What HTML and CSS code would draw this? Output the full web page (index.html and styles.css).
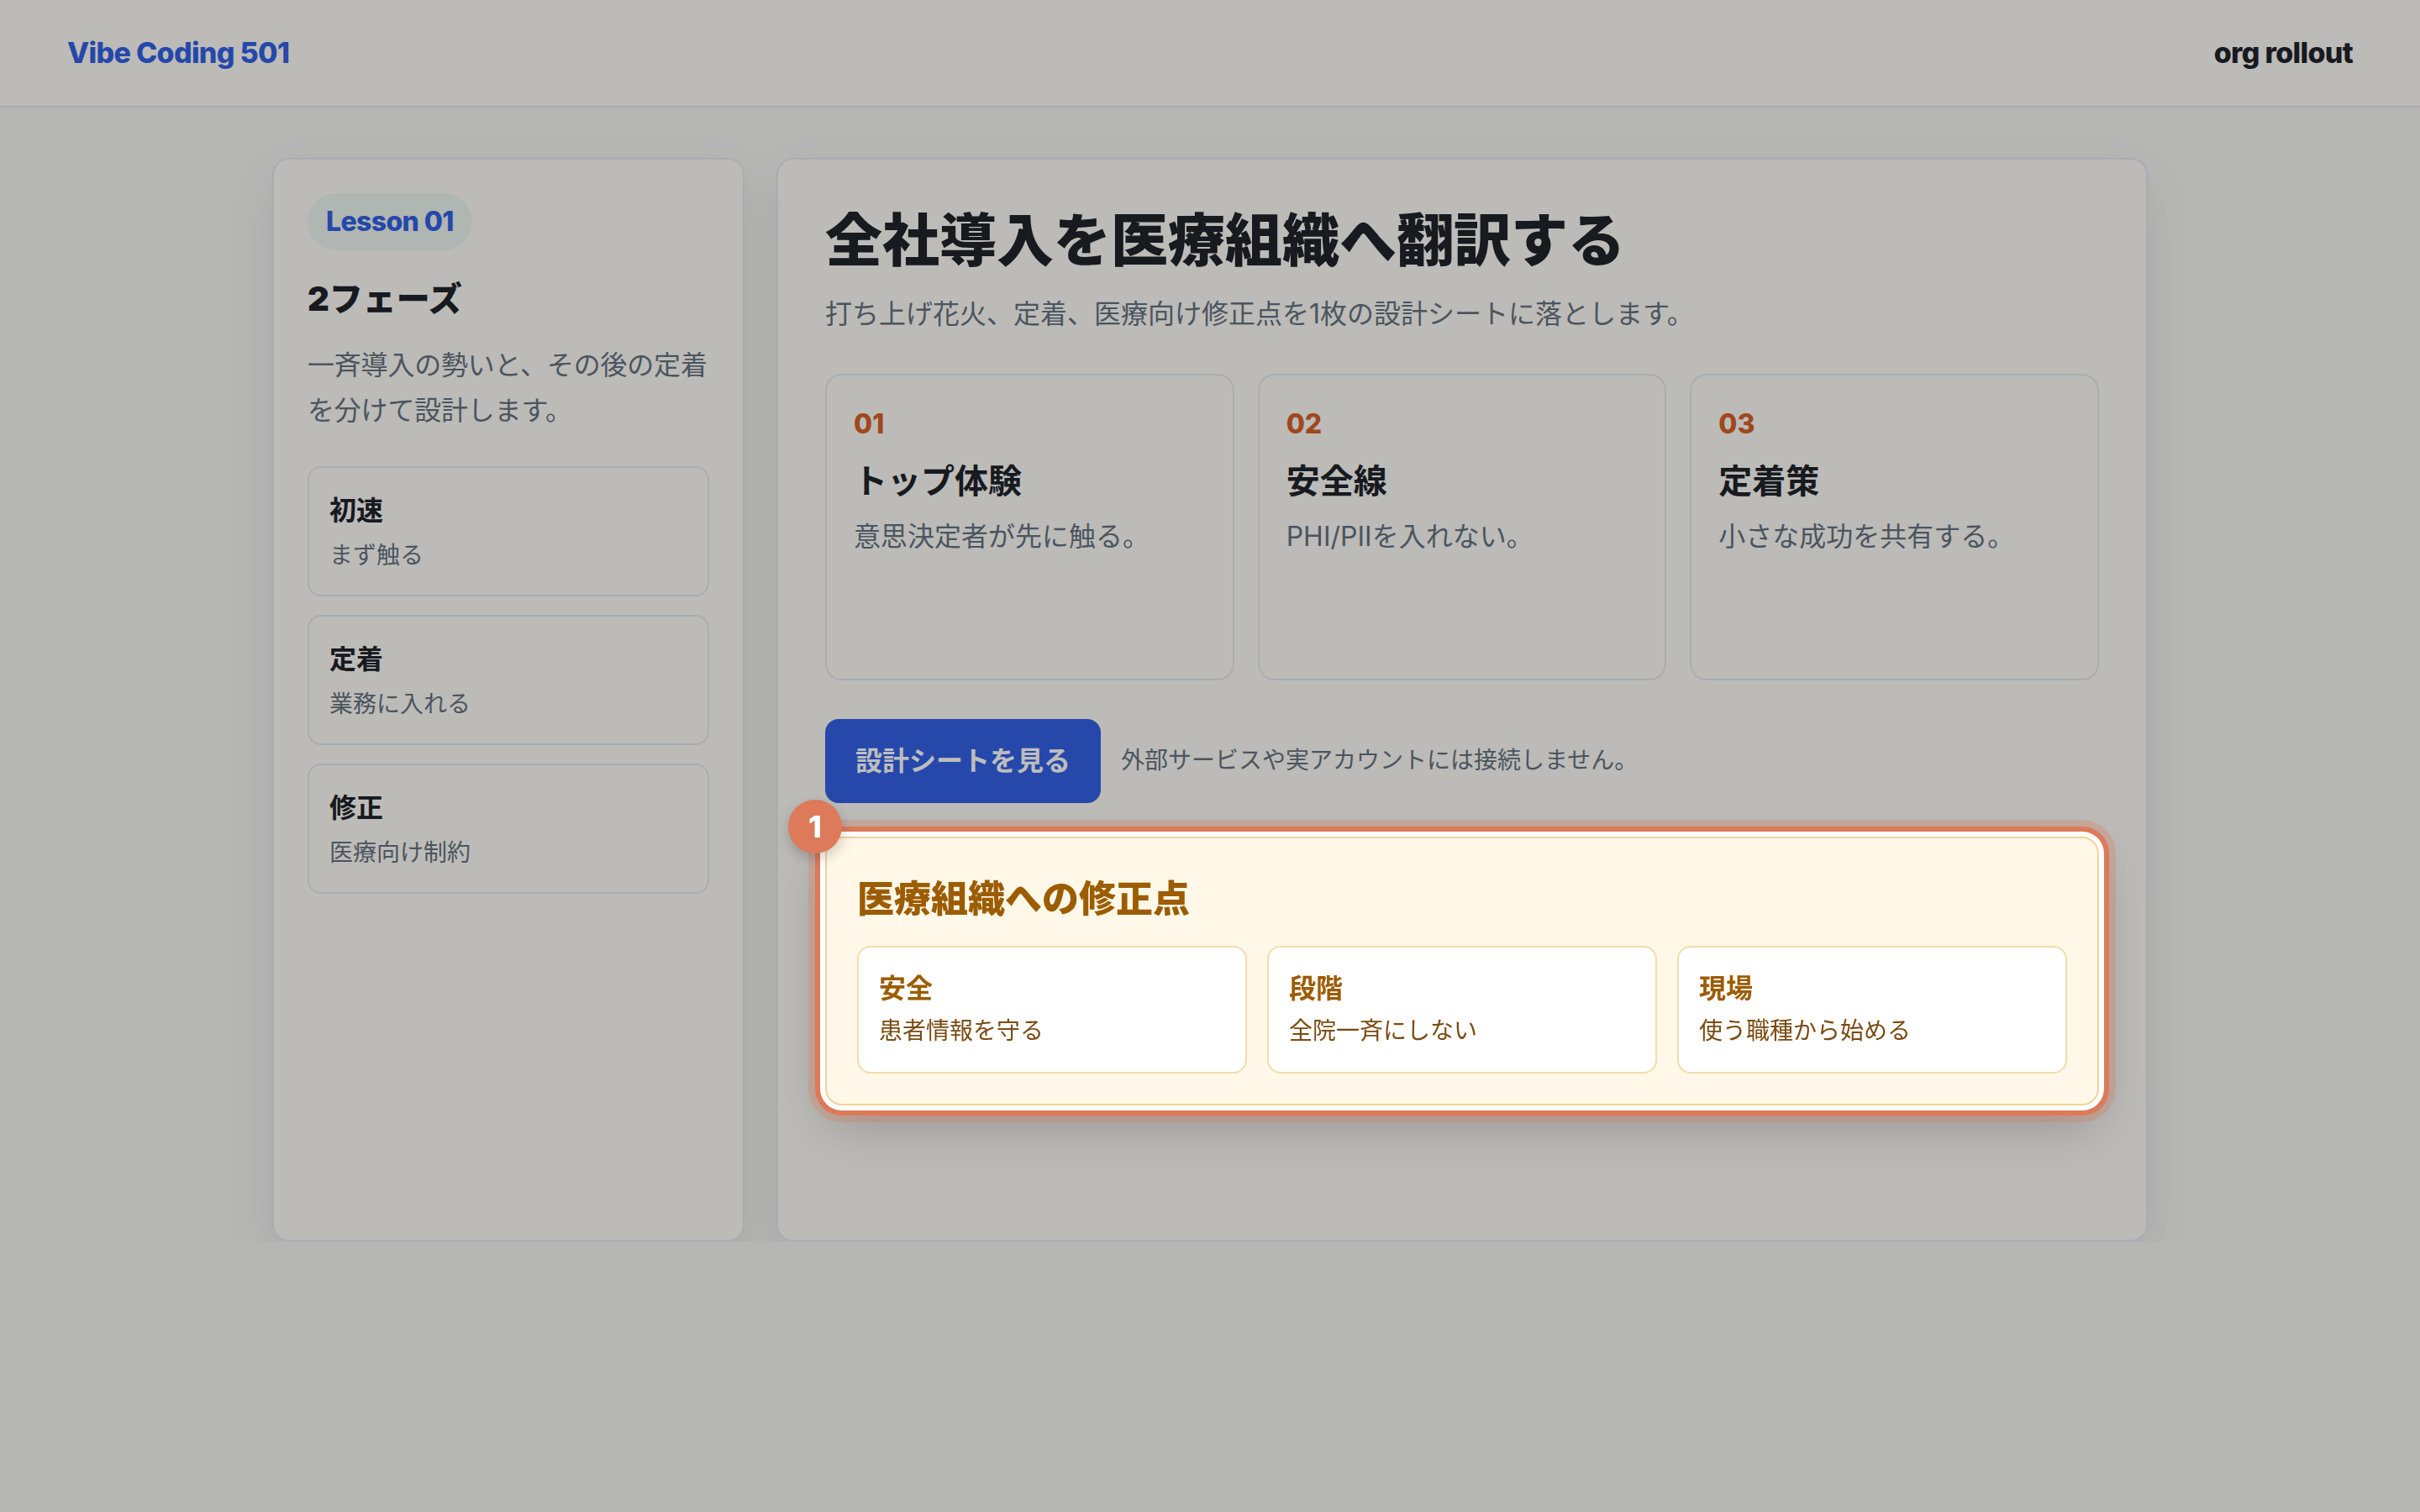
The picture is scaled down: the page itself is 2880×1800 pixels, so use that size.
FILE: index.html
```html
<!DOCTYPE html>
<html lang="ja">
<head>
    <meta charset="UTF-8">
    <meta name="viewport" content="width=device-width, initial-scale=1.0">
    <title>Vibe Coding 501 - org rollout</title>
    <link rel="stylesheet" href="styles.css">
</head>
<body>
    <header class="topbar">
        <div class="brand">Vibe Coding 501</div>
        <div class="topbar-tag">org rollout</div>
    </header>

    <div class="layout">
        <aside class="panel sidebar">
            <span class="pill">Lesson 01</span>
            <h2 class="side-title">2フェーズ</h2>
            <p class="side-desc">一斉導入の勢いと、その後の定着を分けて設計します。</p>
            <div class="steps">
                <div class="step">
                    <div class="step-title">初速</div>
                    <div class="step-desc">まず触る</div>
                </div>
                <div class="step">
                    <div class="step-title">定着</div>
                    <div class="step-desc">業務に入れる</div>
                </div>
                <div class="step">
                    <div class="step-title">修正</div>
                    <div class="step-desc">医療向け制約</div>
                </div>
            </div>
        </aside>

        <main class="panel main">
            <h1>全社導入を医療組織へ翻訳する</h1>
            <p class="lead">打ち上げ花火、定着、医療向け修正点を1枚の設計シートに落とします。</p>

            <div class="features">
                <div class="feature">
                    <div class="feature-num">01</div>
                    <h3>トップ体験</h3>
                    <p>意思決定者が先に触る。</p>
                </div>
                <div class="feature">
                    <div class="feature-num">02</div>
                    <h3>安全線</h3>
                    <p>PHI/PIIを入れない。</p>
                </div>
                <div class="feature">
                    <div class="feature-num">03</div>
                    <h3>定着策</h3>
                    <p>小さな成功を共有する。</p>
                </div>
            </div>

            <div class="actions">
                <button class="btn-primary">設計シートを見る</button>
                <span class="actions-note">外部サービスや実アカウントには接続しません。</span>
            </div>

            <!-- highlighted step of the walkthrough -->
            <section class="callout">
                <span class="callout-badge">1</span>
                <h2>医療組織への修正点</h2>
                <div class="fixes">
                    <div class="fix">
                        <div class="fix-title">安全</div>
                        <div class="fix-desc">患者情報を守る</div>
                    </div>
                    <div class="fix">
                        <div class="fix-title">段階</div>
                        <div class="fix-desc">全院一斉にしない</div>
                    </div>
                    <div class="fix">
                        <div class="fix-title">現場</div>
                        <div class="fix-desc">使う職種から始める</div>
                    </div>
                </div>
            </section>
        </main>
    </div>

    <div class="dim"></div>
</body>
</html>
```

FILE: styles.css
```css
:root {
    --page-bg: #f6f6f3;
    --panel-bg: #fefdf9;
    --border: #e4eaf0;
    --text: #20242a;
    --muted: #667380;
    --blue: #3262e6;
    --accent: #d86128;
    --spot: #dc7a5a;
    --amber: #9c5c00;
}
* {
    box-sizing: border-box;
}
body, html {
    margin: 0;
    padding: 0;
}
body {
    background: var(--page-bg);
    color: var(--text);
    font-family: Inter, "Noto Sans CJK JP", sans-serif;
    font-size: 32px;
    line-height: 1.6;
}
h1, h2, h3, p {
    margin: 0;
}

/* top bar */
.topbar {
    height: 128px;
    padding: 0 80px;
    display: flex;
    align-items: center;
    justify-content: space-between;
    background: var(--panel-bg);
    border-bottom: 2px solid var(--border);
}
.brand {
    font-size: 34px;
    font-weight: 800;
    color: var(--blue);
    letter-spacing: -0.02em;
}
.topbar-tag {
    font-size: 34px;
    font-weight: 800;
    color: var(--text);
    letter-spacing: -0.02em;
}

/* two column layout */
.layout {
    width: 2232px;
    margin: 60px auto 0;
    display: grid;
    grid-template-columns: 562px 1fr;
    gap: 38px;
}
.panel {
    background: var(--panel-bg);
    border: 2px solid var(--border);
    border-radius: 20px;
    box-shadow: 0 24px 60px rgba(20, 20, 20, 0.08);
}

/* sidebar */
.sidebar {
    padding: 40px;
}
.pill {
    display: inline-block;
    padding: 10px 22px;
    border-radius: 999px;
    background: #eef6f0;
    color: var(--blue);
    font-size: 32px;
    font-weight: 800;
    line-height: 48px;
    letter-spacing: -0.02em;
}
.side-title {
    margin-top: 30px;
    font-size: 40px;
    font-weight: 900;
    line-height: 56px;
}
.side-desc {
    margin-top: 24px;
    font-size: 32px;
    line-height: 1.7;
    letter-spacing: -0.2px;
    color: var(--muted);
}
.steps {
    margin-top: 38px;
    display: flex;
    flex-direction: column;
    gap: 22px;
}
.step {
    border: 2px solid var(--border);
    border-radius: 16px;
    padding: 25px 24px 24px;
}
.step-title {
    font-size: 32px;
    font-weight: 700;
    line-height: 1.6;
}
.step-desc {
    margin-top: 6px;
    font-size: 28px;
    line-height: 1.6;
    color: var(--muted);
}

/* main panel */
.main {
    padding: 56px;
    min-height: 1290px;
}
.main h1 {
    font-size: 68px;
    font-weight: 900;
    line-height: 1.2;
}
.lead {
    margin-top: 20px;
    font-size: 32px;
    color: var(--muted);
}
.features {
    margin-top: 46px;
    display: grid;
    grid-template-columns: repeat(3, 1fr);
    gap: 28px;
}
.feature {
    min-height: 365px;
    padding: 34px 32px 32px;
    border: 2px solid var(--border);
    border-radius: 20px;
}
.feature-num {
    font-size: 32px;
    font-weight: 800;
    line-height: 48px;
    color: var(--accent);
}
.feature h3 {
    margin-top: 16px;
    font-size: 40px;
    font-weight: 700;
    line-height: 56px;
}
.feature p {
    margin-top: 12px;
    font-size: 32px;
    color: var(--muted);
}
.actions {
    margin-top: 46px;
    display: flex;
    align-items: center;
    gap: 24px;
}
.btn-primary {
    background: var(--blue);
    color: #fff;
    border: none;
    border-radius: 16px;
    padding: 26px 36px;
    font-family: inherit;
    font-size: 32px;
    font-weight: 700;
    line-height: 48px;
    cursor: pointer;
}
.actions-note {
    font-size: 28px;
    color: var(--muted);
}

/* highlighted callout sits above the dim layer */
.callout {
    position: relative;
    z-index: 20;
    margin-top: 40px;
    padding: 36px;
    background: #fff8e8;
    border: 2px solid #f0d49a;
    border-radius: 20px;
    box-shadow:
        0 0 0 6px #fff,
        0 0 0 12px var(--spot),
        0 0 0 20px rgba(220, 122, 90, 0.3),
        0 24px 60px rgba(0, 0, 0, 0.2);
}
.callout h2 {
    font-size: 44px;
    font-weight: 900;
    line-height: 72px;
    color: var(--amber);
}
.callout-badge {
    position: absolute;
    left: -46px;
    top: -46px;
    width: 64px;
    height: 64px;
    border-radius: 50%;
    background: var(--spot);
    color: #fff;
    font-size: 36px;
    font-weight: 800;
    line-height: 64px;
    text-align: center;
    box-shadow: 0 6px 16px rgba(0, 0, 0, 0.2);
}
.fixes {
    margin-top: 20px;
    display: grid;
    grid-template-columns: repeat(3, 1fr);
    gap: 24px;
}
.fix {
    background: #fff;
    border: 2px solid #f2dcaa;
    border-radius: 16px;
    padding: 25px 24px 26px;
}
.fix-title {
    font-size: 32px;
    font-weight: 700;
    line-height: 48px;
    color: var(--amber);
}
.fix-desc {
    margin-top: 4px;
    font-size: 28px;
    color: #7a4b12;
}

/* walkthrough dim layer */
.dim {
    position: fixed;
    inset: 0;
    z-index: 10;
    background: rgba(0, 0, 0, 0.26);
}
```
